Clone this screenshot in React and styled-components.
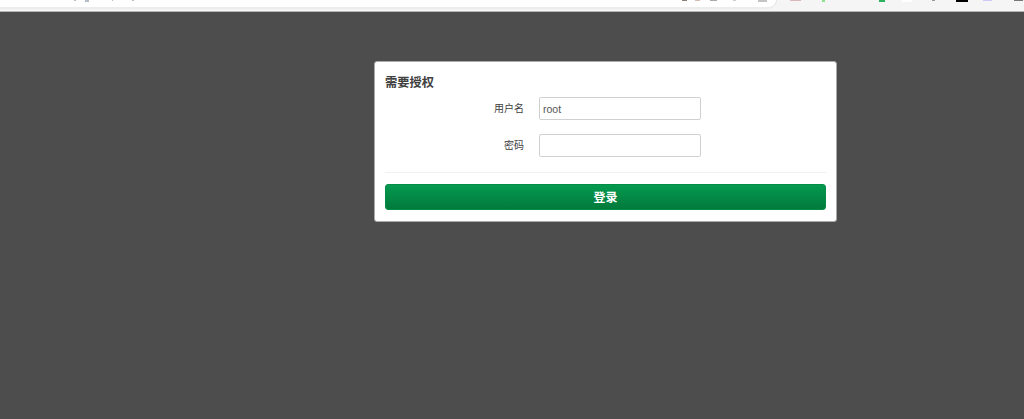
import React from 'react';
import styled, { createGlobalStyle } from 'styled-components';

const GlobalStyle = createGlobalStyle`
  html, body {
    margin: 0;
    padding: 0;
    height: 100%;
    background: #4d4d4d;
  }
  * {
    box-sizing: border-box;
  }
`;

const Page = styled.div`
  width: 1024px;
  height: 419px;
  overflow: hidden;
  display: flex;
  flex-direction: column;
  background: #4d4d4d;
  font-family: "Liberation Sans", "Noto Sans CJK SC", sans-serif;
`;

const BrowserBar = styled.div`
  position: relative;
  height: 12px;
  flex: none;
  background: #f5f5f5;
  border-bottom: 1px solid #b5b5b5;
`;

const AddressBar = styled.div`
  width: 777px;
  height: 9px;
  background: #fff;
  border-bottom: 2px solid #ececec;
  border-right: 1px solid #e4e4e4;
  border-bottom-right-radius: 10px;
`;

// the screenshot cuts the browser's toolbar icons off, only their lower edges show
const IconStub = styled.span`
  position: absolute;
  top: 0;
  left: ${p => p.$left}px;
  width: ${p => p.$width}px;
  height: ${p => p.$height || 1}px;
  background: ${p => p.$color};
`;

const toolbarStubs = [
  { left: 74, width: 2, height: 1, color: '#bbb' },
  { left: 85, width: 4, height: 2, color: '#b4bcc8' },
  { left: 112, width: 1, height: 1, color: '#bbb' },
  { left: 132, width: 2, height: 1, color: '#bbb' },
  { left: 682, width: 5, height: 1, color: '#8a8078' },
  { left: 695, width: 5, height: 1, color: '#d8bcae' },
  { left: 710, width: 7, height: 1, color: '#aaa' },
  { left: 733, width: 3, height: 1, color: '#ccc' },
  { left: 758, width: 9, height: 2, color: '#c4c4c4' },
  { left: 790, width: 11, height: 1, color: '#dbb8b8' },
  { left: 822, width: 3, height: 2, color: '#8fe08f' },
  { left: 879, width: 6, height: 2, color: '#2bb25c' },
  { left: 902, width: 10, height: 2, color: '#fff' },
  { left: 932, width: 3, height: 1, color: '#999' },
  { left: 956, width: 12, height: 2, color: '#000' },
  { left: 983, width: 9, height: 1, color: '#cfcaf5' },
  { left: 1014, width: 9, height: 1, color: '#777' },
];

const Stage = styled.main`
  flex: 1;
  padding: 49px 0 0 374px;
`;

const Card = styled.form`
  width: 463px;
  height: 161px;
  padding: 12px 10px 0;
  background: #fff;
  border: 1px solid #aaa;
  border-radius: 3px;
`;

const Title = styled.h2`
  margin: 0;
  font-size: 12.25px;
  line-height: 18px;
  font-weight: 700;
  color: #404040;
`;

const Fields = styled.div`
  display: flex;
  flex-direction: column;
  gap: 14px;
  margin-top: 5px;
`;

const Row = styled.div`
  display: flex;
  align-items: center;
  gap: 15px;
`;

const Label = styled.label`
  width: 139px;
  padding-bottom: 2px;
  text-align: right;
  font-size: 10px;
  color: #404040;
`;

const Input = styled.input`
  width: 162px;
  height: 23px;
  padding: 0 3px;
  background: #fff;
  border: 1px solid #d0d0d0;
  border-radius: 2px;
  font: 10.5px "Liberation Sans", sans-serif;
  color: #555;
  outline: none;
`;

const Divider = styled.hr`
  margin: 15px 0 11px;
  border: 0;
  border-top: 1px solid #f0f0f0;
`;

const SubmitButton = styled.button`
  display: block;
  width: 100%;
  height: 26px;
  padding: 0 0 2px;
  border: 1px solid #038c45;
  border-radius: 3px;
  background: linear-gradient(#049a4f, #027a3c);
  color: #fff;
  font-family: inherit;
  font-size: 12px;
  font-weight: 700;
`;

export default function App() {
  return (
    <Page>
      <GlobalStyle />
      <BrowserBar>
        <AddressBar />
        {toolbarStubs.map(s => (
          <IconStub key={s.left} $left={s.left} $width={s.width} $height={s.height} $color={s.color} />
        ))}
      </BrowserBar>
      <Stage>
        <Card onSubmit={e => e.preventDefault()}>
          <Title>需要授权</Title>
          <Fields>
            <Row>
              <Label htmlFor="username">用户名</Label>
              <Input id="username" defaultValue="root" />
            </Row>
            <Row>
              <Label htmlFor="password">密码</Label>
              <Input id="password" type="password" />
            </Row>
          </Fields>
          <Divider />
          <SubmitButton type="submit">登录</SubmitButton>
        </Card>
      </Stage>
    </Page>
  );
}
